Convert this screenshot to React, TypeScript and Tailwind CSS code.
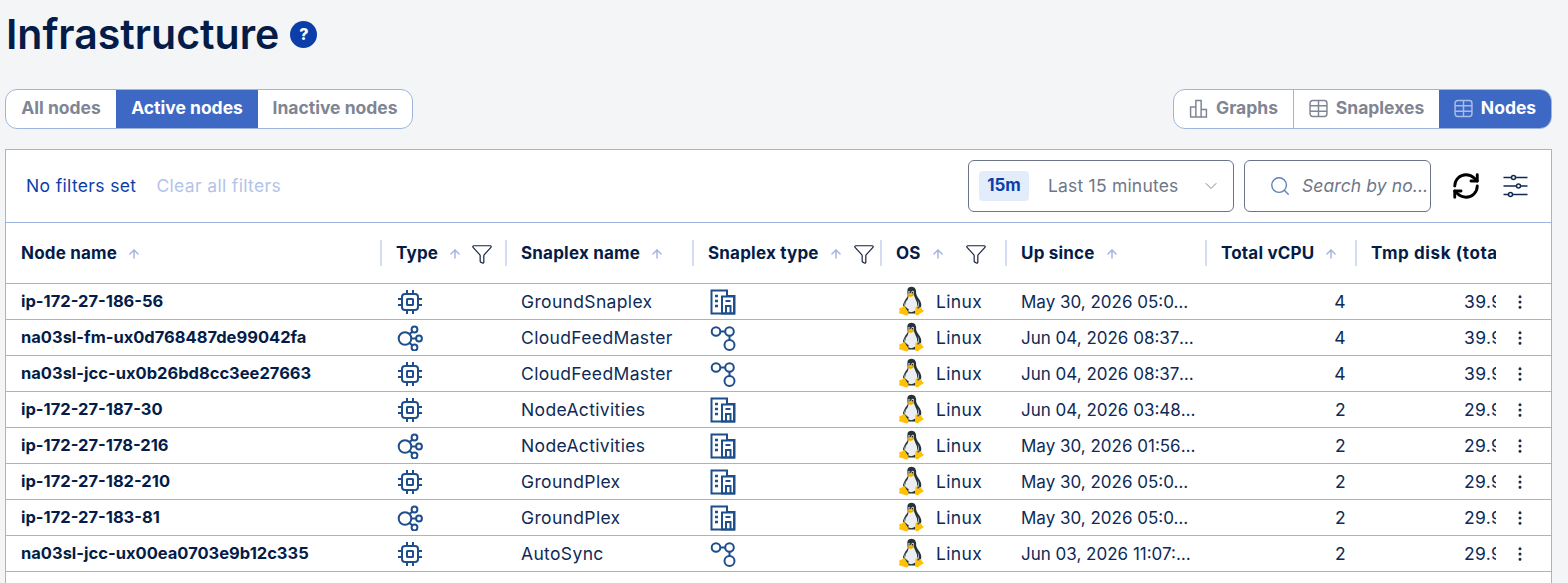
import { ArrowUp, ChevronDown, EllipsisVertical, Funnel, RefreshCw, Search } from "lucide-react"
import { FcLinux } from "react-icons/fc"

const font = { fontFamily: "Inter, sans-serif" }

const GRID = "grid grid-cols-[375px_125px_187px_188px_125px_200px_150px_140px_56px] items-center"

const columns = [
  { title: "Node name", first: true },
  { title: "Type", filterGap: "ml-[9px]" },
  { title: "Snaplex name" },
  { title: "Snaplex type", filterGap: "ml-[10px]" },
  { title: "OS", filterGap: "ml-[20px]" },
  { title: "Up since" },
  { title: "Total vCPU" },
]

const rows = [
  { name: "ip-172-27-186-56", type: "cpu", plex: "GroundSnaplex", plexType: "building", up: "May 30, 2026 05:07:12 PM", cpu: 4, disk: "39.99 GB" },
  { name: "na03sl-fm-ux0d768487de99042fa", type: "share", plex: "CloudFeedMaster", plexType: "nodes", up: "Jun 04, 2026 08:37:44 AM", cpu: 4, disk: "39.99 GB" },
  { name: "na03sl-jcc-ux0b26bd8cc3ee27663", type: "cpu", plex: "CloudFeedMaster", plexType: "nodes", up: "Jun 04, 2026 08:37:51 AM", cpu: 4, disk: "39.99 GB" },
  { name: "ip-172-27-187-30", type: "cpu", plex: "NodeActivities", plexType: "building", up: "Jun 04, 2026 03:48:20 AM", cpu: 2, disk: "29.99 GB" },
  { name: "ip-172-27-178-216", type: "share", plex: "NodeActivities", plexType: "building", up: "May 30, 2026 01:56:03 AM", cpu: 2, disk: "29.99 GB" },
  { name: "ip-172-27-182-210", type: "cpu", plex: "GroundPlex", plexType: "building", up: "May 30, 2026 05:07:33 PM", cpu: 2, disk: "29.99 GB" },
  { name: "ip-172-27-183-81", type: "share", plex: "GroundPlex", plexType: "building", up: "May 30, 2026 05:07:40 PM", cpu: 2, disk: "29.99 GB" },
  { name: "na03sl-jcc-ux00ea0703e9b12c335", type: "cpu", plex: "AutoSync", plexType: "nodes", up: "Jun 03, 2026 11:07:19 AM", cpu: 2, disk: "29.99 GB" },
]

const CpuIcon = () => (
  <svg width="26" height="26" viewBox="0 0 26 26" fill="none" stroke="#1f4e8c" strokeWidth="2">
    <rect x="5" y="5" width="16" height="16" rx="3" />
    <rect x="10" y="10" width="6" height="6" rx="0.5" />
    <path d="M10 1v4M16 1v4M10 21v4M16 21v4M1 10h4M1 16h4M21 10h4M21 16h4" />
  </svg>
)

const ShareIcon = () => (
  <svg width="26" height="26" viewBox="0 0 26 26" fill="none" stroke="#1f4e8c" strokeWidth="2">
    <circle cx="8" cy="13.5" r="6.3" />
    <circle cx="17.5" cy="4.5" r="2.9" />
    <circle cx="22" cy="13.5" r="2.9" />
    <circle cx="17.5" cy="22.5" r="2.9" />
    <path d="M12.5 9l3-2.4M14.3 13.5h4.8M12.5 18l3 2.4" />
  </svg>
)

const BuildingIcon = () => (
  <svg width="26" height="26" viewBox="0 0 26 26" fill="none" stroke="#1f4e8c" strokeWidth="2">
    <path d="M17 7V1.5H1.5v23h23V7z" />
    <path d="M12 7.5h12v17H12z" />
    <path d="M5 7h3M5 12h3M5 17h3" strokeWidth="2.6" />
    <path d="M15.5 12h5M16 24v-7h4.5v7" />
  </svg>
)

const NodesIcon = () => (
  <svg width="26" height="26" viewBox="0 0 26 26" fill="none" stroke="#1f4e8c" strokeWidth="2">
    <circle cx="6" cy="6.5" r="4.3" />
    <circle cx="19.5" cy="6.5" r="4.3" />
    <circle cx="19.5" cy="20" r="5" />
    <path d="M10.3 6.5h4.9M19.5 10.8V15" />
  </svg>
)

const TableIcon = ({ className }: { className: string }) => (
  <svg className={className} width="19" height="19" viewBox="0 0 18 18" fill="none" stroke="currentColor" strokeWidth="1.4">
    <rect x="1" y="1.5" width="16" height="15" rx="2.5" />
    <path d="M1 6.5h16M1 11.5h16M9 1.5v15" />
  </svg>
)

const GraphIcon = () => (
  <svg className="text-[#7f8594]" width="19" height="19" viewBox="0 0 18 18" fill="none" stroke="currentColor" strokeWidth="1.4">
    <path d="M1.5 17V7.5h5V17M6.5 17V1.5h5V17M11.5 17V10h5v7zM1 17h16" />
  </svg>
)

const SlidersIcon = () => (
  <svg width="27" height="28" viewBox="0 0 26 28" fill="none" stroke="#0f2a52" strokeWidth="1.5">
    <path d="M1 5.5h8M13 5.5h12M1 14h13M18 14h7M1 22.5h5M10 22.5h15" />
    <circle cx="11" cy="5.5" r="2" />
    <circle cx="16" cy="14" r="2" />
    <circle cx="8" cy="22.5" r="2" />
  </svg>
)

const Header = ({ title, filterGap, first }: { title: string; filterGap?: string; first?: boolean }) => (
  <div className={`flex h-[26px] items-center pt-[2px] ${first ? "pl-[15px]" : "-ml-px border-l-2 border-[#d3dcf0] pl-[14px]"}`}>
    <span className="text-[17px] font-bold tracking-[0.2px] text-[#041c47] whitespace-nowrap">{title}</span>
    <ArrowUp className="ml-2.5 text-[#a3b6e0]" size={14} strokeWidth={2.5} />
    {filterGap && <Funnel className={`${filterGap} text-[#14233f]`} size={22} strokeWidth={1.3} />}
  </div>
)

export default function App() {
  return (
    <div className="h-[583px] overflow-hidden bg-[#f4f5f7]" style={font}>
      <div className="flex items-center gap-[11px] pl-1.5 pt-[10px]">
        <h1 className="text-[41px] leading-[48px] font-semibold text-[#041c47]">Infrastructure</h1>
        <span className="flex h-[27px] w-[27px] items-center justify-center rounded-full bg-[#0c3eaa] text-base font-extrabold text-white">?</span>
      </div>

      <div className="mt-[31px] flex justify-between pl-[5px] pr-4">
        <div className="flex h-10 overflow-hidden rounded-xl border border-[#9fb3e0] bg-white text-[17.5px] font-bold text-[#7f8594]">
          <div className="flex w-[110px] items-center justify-center pb-[2px]">All nodes</div>
          <div className="flex w-[142px] items-center justify-center bg-[#3d68c4] pb-[2px] text-white">Active nodes</div>
          <div className="flex w-[154px] items-center justify-center pb-[2px]">Inactive nodes</div>
        </div>
        <div className="flex h-10 overflow-hidden rounded-xl border border-[#9fb3e0] bg-white text-[17.5px] font-bold text-[#7f8594]">
          <div className="flex w-[120px] items-center justify-center gap-2 border-r border-[#9fb3e0] pb-[2px]"><GraphIcon />Graphs</div>
          <div className="flex w-[145px] items-center justify-center gap-2 pb-[2px]"><TableIcon className="text-[#7f8594]" />Snaplexes</div>
          <div className="flex w-[112px] items-center justify-center gap-2 bg-[#3d68c4] pb-[2px] text-white"><TableIcon className="text-[#a9bde8]" />Nodes</div>
        </div>
      </div>

      <div className="ml-[5px] mr-4 mt-5 h-[500px] border border-[#9fb3e0] bg-white">
        <div className="flex h-[73px] items-center border-b border-[#9fb3e0] pl-5 pr-[22px] text-[17.5px] tracking-[0.35px]">
          <span className="text-[#0c3eaa]">No filters set</span>
          <span className="ml-5 text-[#b3c3e8]">Clear all filters</span>
          <div className="ml-auto flex h-[52px] w-[266px] items-center rounded-md border border-[#6b7488] pl-[10px] pr-[12px]">
            <span className="flex h-[30px] w-[50px] items-center justify-center rounded bg-[#e3ecfb] text-[17px] font-bold tracking-normal text-[#0c3eaa]">15m</span>
            <span className="ml-[19px] tracking-[0.2px] text-[#6f7688]">Last 15 minutes</span>
            <ChevronDown className="ml-auto text-[#7f8594]" size={20} strokeWidth={1.2} />
          </div>
          <div className="ml-[10px] flex h-[52px] w-[187px] items-center overflow-hidden rounded-md border border-[#6b7488] pl-6">
            <Search className="text-[#5f7fb8]" size={22} strokeWidth={1.5} />
            <span className="ml-[11px] whitespace-nowrap tracking-[0.1px] italic text-[#6f7688]">Search by no...</span>
          </div>
          <RefreshCw className="-my-px ml-[20px] -mr-px text-black" size={30} strokeWidth={2.3} />
          <div className="ml-[22px]"><SlidersIcon /></div>
        </div>

        <div className={`${GRID} h-[61px] border-b border-[#9fb3e0]`}>
          {columns.map((c) => <Header key={c.title} {...c} />)}
          <div className="-ml-px flex h-[26px] items-center overflow-hidden border-l-2 border-[#d3dcf0] pl-[14px] pt-[2px]">
            <span className="text-[17px] font-bold tracking-[0.6px] text-[#041c47] whitespace-nowrap">Tmp disk (total)</span>
          </div>
          <div />
        </div>

        {rows.map((r) => (
          <div key={r.name} className={`${GRID} h-9 border-b border-[#9fb3e0] text-[17.5px] tracking-[0.35px] text-[#0e2a56]`}>
            <div className="pl-[15px] text-[16.5px] font-bold tracking-normal text-[#041c47] whitespace-nowrap">{r.name}</div>
            <div className="pl-[16px]">
              {r.type === "cpu" ? <CpuIcon /> : <ShareIcon />}
            </div>
            <div className="pl-[15px] pt-[2px]">{r.plex}</div>
            <div className="pl-[17px]">
              {r.plexType === "building" ? <BuildingIcon /> : <NodesIcon />}
            </div>
            <div className="flex items-center pl-[15px]">
              <FcLinux className="-mb-[3px] -ml-1 -mt-[5px]" size={38} />
              <span className="ml-[6px] pt-[2px]">Linux</span>
            </div>
            <div className="truncate pl-[15px] pr-[9px] pt-[2px] text-[17px] tracking-normal">{r.up}</div>
            <div className="pr-2.5 pt-[2px] text-right">{r.cpu}</div>
            <div className="overflow-hidden pl-[108px] pt-[2px] whitespace-nowrap">{r.disk}</div>
            <div className="flex justify-center pr-[8px]"><EllipsisVertical className="text-[#1c2a44]" size={18} /></div>
          </div>
        ))}
      </div>
    </div>
  )
}
